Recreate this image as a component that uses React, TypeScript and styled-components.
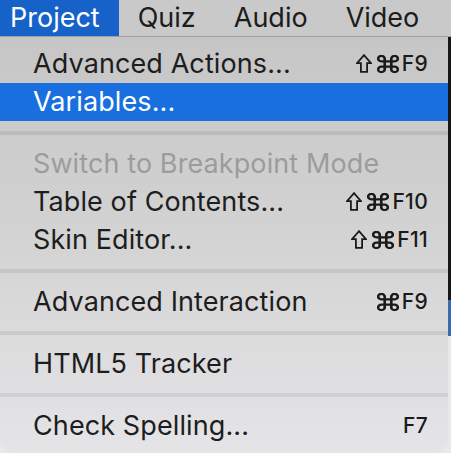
import React from 'react';
import styled, { createGlobalStyle } from 'styled-components';

const GlobalStyle = createGlobalStyle`
  html, body {
    margin: 0;
    padding: 0;
  }
  body {
    width: 451px;
    height: 453px;
    overflow: hidden;
    font-family: Inter, "Noto Sans", "Liberation Sans", sans-serif;
    background: linear-gradient(to bottom, #161616 0, #161616 300px, #3a6cb3 300px, #3a6cb3 336px, #e9e9e9 336px);
  }
`;

const Screen = styled.div`
  display: flex;
  flex-direction: column;
  width: 451px;
  height: 453px;
`;

const MenuBar = styled.div`
  display: flex;
  height: 36px;
  background: #c9c9c9;
  border-bottom: 1px solid #9f9f9f;
`;

const BarItem = styled.div<{ active?: boolean; first?: boolean }>`
  display: flex;
  align-items: center;
  height: 100%;
  padding: 0 19px 0 ${p => (p.first ? '10px' : '19px')};
  font-size: 27px;
  line-height: 36px;
  color: ${p => (p.active ? '#ffffff' : '#1c1c1c')};
  background: ${p => (p.active ? '#1662c9' : 'transparent')};
`;

const Dropdown = styled.div`
  width: 448px;
  padding: 8px 0;
  background: linear-gradient(to bottom, #c6c6c6 0%, #d2d2d3 45%, #e5e5e7 100%);
  border-radius: 0 0 12px 12px;
  box-sizing: border-box;
`;

const Item = styled.div<{ selected?: boolean; disabled?: boolean }>`
  display: flex;
  align-items: center;
  justify-content: space-between;
  height: 38px;
  padding: 0 20px 0 33px;
  font-size: 27px;
  line-height: 38px;
  letter-spacing: 0.1px;
  color: ${p => (p.selected ? '#ffffff' : p.disabled ? '#9c9c9c' : '#1d1d1d')};
  background: ${p => (p.selected ? '#186fdd' : 'transparent')};
`;

const Shortcut = styled.span`
  display: flex;
  align-items: center;
  font-size: 21px;
  font-weight: 500;
  letter-spacing: 0.3px;
  color: #1a1a1a;

  svg {
    display: block;
    flex: none;
  }
`;

const ShiftGlyph = styled.svg`
  width: 16px;
  height: 19px;
  margin-right: 5px;
  margin-top: -2px;
`;

const CmdGlyph = styled.svg`
  width: 22px;
  height: 18px;
  margin-right: 3px;
`;

const Separator = styled.div`
  height: 4px;
  margin: 10px 0;
  background: rgba(0, 0, 0, 0.075);
`;

const Shift = () => (
  <ShiftGlyph viewBox="0 0 16 19">
    <path
      d="M8 1.2 L15 9.2 H11.1 V17.9 H4.9 V9.2 H1 Z"
      fill="none"
      stroke="currentColor"
      strokeWidth="1.8"
      strokeLinejoin="miter"
    />
  </ShiftGlyph>
);

const Cmd = () => (
  <CmdGlyph viewBox="2 2 20 20" preserveAspectRatio="none">
    <path
      d="M15 6v12a3 3 0 1 0 3-3H6a3 3 0 1 0 3 3V6a3 3 0 1 0-3 3h12a3 3 0 1 0-3-3"
      fill="none"
      stroke="currentColor"
      strokeWidth="2.4"
    />
  </CmdGlyph>
);

type Entry =
  | { kind: 'item'; label: string; shift?: boolean; cmd?: boolean; key?: string; selected?: boolean; disabled?: boolean }
  | { kind: 'sep' };

const entries: Entry[] = [
  { kind: 'item', label: 'Advanced Actions...', shift: true, cmd: true, key: 'F9' },
  { kind: 'item', label: 'Variables...', selected: true },
  { kind: 'sep' },
  { kind: 'item', label: 'Switch to Breakpoint Mode', disabled: true },
  { kind: 'item', label: 'Table of Contents...', shift: true, cmd: true, key: 'F10' },
  { kind: 'item', label: 'Skin Editor...', shift: true, cmd: true, key: 'F11' },
  { kind: 'sep' },
  { kind: 'item', label: 'Advanced Interaction', cmd: true, key: 'F9' },
  { kind: 'sep' },
  { kind: 'item', label: 'HTML5 Tracker' },
  { kind: 'sep' },
  { kind: 'item', label: 'Check Spelling...', key: 'F7' },
];

const barItems = ['Project', 'Quiz', 'Audio', 'Video'];

export default function App() {
  return (
    <>
      <GlobalStyle />
      <Screen>
        <MenuBar>
          {barItems.map((name, i) => (
            <BarItem key={name} active={i === 0} first={i === 0}>
              {name}
            </BarItem>
          ))}
        </MenuBar>
        <Dropdown>
          {entries.map((e, i) =>
            e.kind === 'sep' ? (
              <Separator key={i} />
            ) : (
              <Item key={i} selected={e.selected} disabled={e.disabled}>
                <span>{e.label}</span>
                {e.key && (
                  <Shortcut>
                    {e.shift && <Shift />}
                    {e.cmd && <Cmd />}
                    {e.key}
                  </Shortcut>
                )}
              </Item>
            )
          )}
        </Dropdown>
      </Screen>
    </>
  );
}
